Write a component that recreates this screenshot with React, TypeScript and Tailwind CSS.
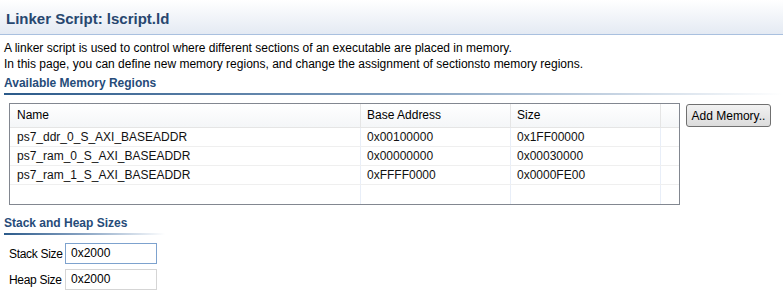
import React from "react";

const font = { fontFamily: '"Liberation Sans", Arial, sans-serif' };

const rows = [
  ["ps7_ddr_0_S_AXI_BASEADDR", "0x00100000", "0x1FF00000"],
  ["ps7_ram_0_S_AXI_BASEADDR", "0x00000000", "0x00030000"],
  ["ps7_ram_1_S_AXI_BASEADDR", "0xFFFF0000", "0x0000FE00"],
  ["", "", ""],
];

function SectionTitle({ text, lineClass }: { text: string; lineClass: string }) {
  return (
    <div className="pl-[4px]">
      <div className="h-[16px] leading-[16px] text-[12px] font-bold text-[#264b79]">{text}</div>
      <div className={`h-[2px] mt-[2px] ${lineClass}`} />
    </div>
  );
}

export default function App() {
  return (
    <div className="w-[783px] h-[300px] bg-white text-[12px] text-black overflow-hidden" style={font}>
      <div className="h-[35px] bg-gradient-to-b from-white to-[#e4eaf3] border-b border-[#a9c0df] pl-[6px] pt-[10px]">
        <div className="text-[15px] leading-[18px] font-bold text-[#27476f]">Linker Script: lscript.ld</div>
      </div>
      <div className="pl-[4px] pt-[5px] leading-[16px]">
        <div>A linker script is used to control where different sections of an executable are placed in memory.</div>
        <div>In this page, you can define new memory regions, and change the assignment of sectionsto memory regions.</div>
      </div>
      <div className="mt-[3px]">
        <SectionTitle text="Available Memory Regions" lineClass="bg-gradient-to-r from-[#2b5a8a] via-[#7f9dbd] to-white w-[779px]" />
      </div>
      <div className="flex items-start mt-[8px] pl-[9px]">
        <div className="w-[671px] border border-[#828790] bg-white">
          <div className="flex h-[24px] border-b border-[#e5e5e5] bg-gradient-to-b from-white to-[#f4f6f8]">
            <div className="w-[351px] border-r border-[#e5e5e5] pl-[7px] leading-[23px]">Name</div>
            <div className="w-[150px] border-r border-[#e5e5e5] pl-[6px] leading-[23px]">Base Address</div>
            <div className="w-[150px] border-r border-[#e5e5e5] pl-[6px] leading-[23px]">Size</div>
            <div className="flex-1" />
          </div>
          {rows.map((r, i) => (
            <div key={i} className={`flex h-[19px] ${i < 3 ? "border-b border-[#efefef]" : ""}`}>
              <div className="w-[351px] border-r border-[#e8eef8] pl-[7px] leading-[18px] text-[#111]">{r[0]}</div>
              <div className="w-[150px] border-r border-[#e8eef8] pl-[6px] leading-[18px] text-[#111]">{r[1]}</div>
              <div className="w-[150px] border-r border-[#e8eef8] pl-[6px] leading-[18px] text-[#111]">{r[2]}</div>
              <div className="flex-1" />
            </div>
          ))}
        </div>
        <button className="ml-[6px] mt-[1px] w-[85px] h-[23px] rounded-[3px] border border-[#707070] bg-gradient-to-b from-[#f2f2f2] to-[#dcdcdc] text-[12px] leading-[20px] text-black" style={font}>
          Add Memory..
        </button>
      </div>
      <div className="mt-[10px]">
        <SectionTitle text="Stack and Heap Sizes" lineClass="bg-gradient-to-r from-[#2b5a8a] via-[#8aa5c4] to-white w-[161px]" />
      </div>
      <div className="pl-[9px] mt-[8px] flex flex-col gap-[5px]">
        <div className="flex items-center h-[21px]">
          <span className="w-[56px] shrink-0 whitespace-nowrap tracking-[-0.3px]">Stack Size</span>
          <div className="w-[92px] h-[21px] border border-[#7da2ce] pl-[5px] leading-[19px]">0x2000</div>
        </div>
        <div className="flex items-center h-[21px]">
          <span className="w-[56px] shrink-0 whitespace-nowrap tracking-[-0.3px]">Heap Size</span>
          <div className="w-[92px] h-[21px] border border-[#d5d5d5] pl-[5px] leading-[19px]">0x2000</div>
        </div>
      </div>
    </div>
  );
}
